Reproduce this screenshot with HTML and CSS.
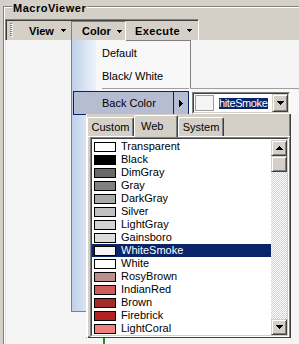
FILE: index.html
```html
<!DOCTYPE html>
<html>
<head>
<meta charset="utf-8">
<title>MacroViewer</title>
<link rel="stylesheet" href="styles.css">
</head>
<body>
<div class="window">
  <div class="groupbox">
    <div class="gb-label">MacroViewer</div>
    <div class="gb-inner">
      <div class="toolbar">
        <div class="grip"></div>
        <div class="tbtn view"><span>View</span><svg class="dd" width="5" height="3" viewBox="0 0 5 3" shape-rendering="crispEdges"><path d="M0 0h5v1h-1v1h-1v1h-1v-1h-1v-1h-1z"/></svg></div>
        <div class="tbtn color"><span>Color</span><svg class="dd" width="5" height="3" viewBox="0 0 5 3" shape-rendering="crispEdges"><path d="M0 0h5v1h-1v1h-1v1h-1v-1h-1v-1h-1z"/></svg></div>
        <div class="tbtn exec"><span>Execute</span><svg class="dd" width="5" height="3" viewBox="0 0 5 3" shape-rendering="crispEdges"><path d="M0 0h5v1h-1v1h-1v1h-1v-1h-1v-1h-1z"/></svg></div>
      </div>
      <div class="panel"></div>
    </div>
  </div>

  <div class="menu">
    <div class="mi">Default</div>
    <div class="mi">Black/ White</div>
    <div class="msep"></div>
    <div class="mi hl"><span>Back Color</span><span class="mi-arrow"><svg width="4" height="7" viewBox="0 0 4 7" shape-rendering="crispEdges"><path d="M0 0h1v1h1v1h1v1h1v1h-1v1h-1v1h-1v1h-1z"/></svg></span></div>
  </div>

  <div class="submenu">
    <div class="combo">
      <div class="combo-in">
        <div class="swatch-big"></div>
        <div class="combo-text">hiteSmoke</div>
        <div class="combo-btn raised"><svg width="7" height="4" viewBox="0 0 7 4" shape-rendering="crispEdges"><path d="M0 0h7v1h-1v1h-1v1h-1v1h-1v-1h-1v-1h-1v-1h-1z"/></svg></div>
      </div>
    </div>
  </div>

  <div class="popup">
    <div class="tabs">
      <div class="tab custom">Custom</div>
      <div class="tab web">Web</div>
      <div class="tab system">System</div>
    </div>
    <div class="page">
      <div class="list">
        <div class="list-in">
          <div class="items">
            <div class="row"><span class="sw" style="background:#ffffff"></span>Transparent</div>
            <div class="row"><span class="sw" style="background:#000000"></span>Black</div>
            <div class="row"><span class="sw" style="background:#696969"></span>DimGray</div>
            <div class="row"><span class="sw" style="background:#808080"></span>Gray</div>
            <div class="row"><span class="sw" style="background:#a9a9a9"></span>DarkGray</div>
            <div class="row"><span class="sw" style="background:#c0c0c0"></span>Silver</div>
            <div class="row"><span class="sw" style="background:#d3d3d3"></span>LightGray</div>
            <div class="row"><span class="sw" style="background:#dcdcdc"></span>Gainsboro</div>
            <div class="row sel"><span class="sw" style="background:#f5f5f5"></span>WhiteSmoke</div>
            <div class="row"><span class="sw" style="background:#ffffff"></span>White</div>
            <div class="row"><span class="sw" style="background:#bc8f8f"></span>RosyBrown</div>
            <div class="row"><span class="sw" style="background:#cd5c5c"></span>IndianRed</div>
            <div class="row"><span class="sw" style="background:#a52a2a"></span>Brown</div>
            <div class="row"><span class="sw" style="background:#b22222"></span>Firebrick</div>
            <div class="row"><span class="sw" style="background:#f08080"></span>LightCoral</div>
          </div>
          <div class="scroll">
            <div class="sbtn raised"><svg width="7" height="4" viewBox="0 0 7 4" shape-rendering="crispEdges"><path d="M3 0h1v1h1v1h1v1h1v1h-7v-1h1v-1h1v-1h1z"/></svg></div>
            <div class="thumb raised"></div>
            <div class="track"></div>
            <div class="sbtn raised"><svg width="7" height="4" viewBox="0 0 7 4" shape-rendering="crispEdges"><path d="M0 0h7v1h-1v1h-1v1h-1v1h-1v-1h-1v-1h-1v-1h-1z"/></svg></div>
          </div>
        </div>
      </div>
    </div>
  </div>

  <div class="wire"></div>
</div>
</body>
</html>
```

FILE: styles.css
```css
* { box-sizing: border-box; }
html, body { margin: 0; padding: 0; }
body {
  width: 299px;
  height: 344px;
  overflow: hidden;
  background: #d4d0c8;
  font-family: "Liberation Sans", Arial, sans-serif;
  font-size: 11px;
  color: #000;
}
.window { position: relative; width: 299px; height: 344px; overflow: hidden; }

/* group box */
.groupbox {
  position: relative;
  margin: 6px 0 0 3px;
  height: 338px;
  border-top: 1px solid #808080;
  border-left: 1px solid #808080;
}
.gb-label {
  position: absolute;
  left: 8px;
  top: -5px;
  z-index: 1;
  padding: 0 1px;
  font: bold 11px "Liberation Sans", Arial, sans-serif;
  line-height: 13px;
  letter-spacing: 0.5px;
  background: #d4d0c8;
}
.gb-inner {
  display: flex;
  flex-direction: column;
  height: 100%;
  padding-top: 11px;
  border-top: 1px solid #fff;
  border-left: 1px solid #fff;
}

/* toolbar */
.toolbar {
  display: flex;
  align-items: stretch;
  flex: none;
  width: 194px;
  height: 21px;
  padding-top: 1px;
  border-top: 1px solid #808080;
  border-left: 1px solid #808080;
  border-right: 1px solid #fff;
  box-shadow: inset 1px 1px 0 #404040, inset -1px 0 0 #d4d0c8;
}
.grip {
  flex: none;
  width: 3px;
  height: 14px;
  margin: 2px 0 0 4px;
  background:
    repeating-linear-gradient(#808080 0 1px, transparent 1px 2px) 0 0 / 2px 100% no-repeat,
    repeating-linear-gradient(#ffffff 0 1px, transparent 1px 2px) 1px 1px / 2px 100% no-repeat;
}
.tbtn {
  display: flex;
  align-items: center;
  flex: none;
  font: bold 11px "Liberation Sans", Arial, sans-serif;
  white-space: nowrap;
}
.tbtn.view { width: 56px; margin-left: 2px; padding: 0 5px 0 14px; }
.tbtn.color {
  width: 55px;
  padding: 0 3px 0 10px;
  border-left: 1px solid #808080;
  border-top: 1px solid #808080;
  border-right: 1px solid #fff;
}
.tbtn.exec { width: 71px; padding: 0 5px 0 9px; letter-spacing: 0.4px; }
.dd { margin-left: auto; flex: none; }

.panel {
  flex: 1;
  background: #f5f5f5;
  border-left: 1px solid #e2e2e2;
}

/* dropdown menu */
.menu {
  position: absolute;
  left: 71px;
  top: 40px;
  width: 120px;
  height: 272px;
  padding-top: 2px;
  border: 1px solid #808080;
  border-top: 0;
  background:
    linear-gradient(to right, #bfd0e9, #edf2f9) 0 0 / 24px 100% no-repeat,
    #f8f8f8;
}
.menu::before {
  content: "";
  position: absolute;
  left: 54px;
  right: 0;
  top: 0;
  height: 1px;
  background: #808080;
}
.mi {
  height: 23px;
  line-height: 23px;
  padding-left: 30px;
  white-space: nowrap;
}
.msep {
  height: 3px;
  margin: 0 1px 0 30px;
  border-top: 1px solid #a0a0a0;
}
.mi.hl {
  display: flex;
  align-items: center;
  height: 24px;
  line-height: normal;
  margin: 0 1px;
  padding-left: 28px;
  border: 1px solid #0a246a;
  background: #b6bdd2;
}
.mi-arrow {
  display: flex;
  align-items: center;
  align-self: stretch;
  width: 15px;
  margin-left: auto;
  padding-left: 5px;
  border-left: 1px solid #0a246a;
}

/* submenu with combo */
.submenu {
  position: absolute;
  left: 190px;
  top: 88px;
  width: 109px;
  height: 27px;
  padding: 3px 0 0 2px;
  border-top: 1px solid #a0a0a0;
  background: #f8f8f8;
}
.combo {
  display: flex;
  width: 98px;
  height: 22px;
  border: 1px solid;
  border-color: #808080 #fff #fff #808080;
}
.combo-in {
  display: flex;
  align-items: flex-start;
  flex: 1;
  border: 1px solid;
  border-color: #404040 #d4d0c8 #d4d0c8 #404040;
  background: #fff;
}
.swatch-big {
  flex: none;
  width: 19px;
  height: 16px;
  margin: 1px 0 0 1px;
  border: 1px solid #9c9c9c;
  background: #f5f5f5;
}
.combo-text {
  flex: none;
  width: 49px;
  height: 11px;
  margin: 4px 0 0 5px;
  line-height: 11px;
  letter-spacing: -0.4px;
  white-space: nowrap;
  overflow: hidden;
  color: #fff;
  background: #0a246a;
}
.combo-btn {
  display: flex;
  align-items: center;
  justify-content: center;
  flex: none;
  width: 16px;
  height: 18px;
  margin-left: auto;
}
.raised {
  background: #d4d0c8;
  border: 1px solid;
  border-color: #d4d0c8 #404040 #404040 #d4d0c8;
  box-shadow: inset 1px 1px 0 #fff, inset -1px -1px 0 #808080;
}

/* color popup */
.popup {
  position: absolute;
  left: 86px;
  top: 114px;
  width: 205px;
  height: 224px;
  display: flex;
  flex-direction: column;
  border-left: 1px solid #fff;
  border-right: 1px solid #404040;
  border-bottom: 1px solid #404040;
  box-shadow: inset -1px -1px 0 #808080;
  background: #d4d0c8;
}
.tabs {
  display: flex;
  align-items: flex-end;
  flex: none;
  height: 22px;
}
.tab {
  flex: none;
  height: 19px;
  line-height: 18px;
  text-align: center;
  white-space: nowrap;
  border: 1px solid #fff;
  border-right-color: #404040;
  border-bottom: 0;
  border-radius: 2px 2px 0 0;
  box-shadow: inset -1px 0 0 #808080;
  background: #d4d0c8;
}
.tab.custom { width: 47px; }
.tab.web {
  position: relative;
  z-index: 1;
  width: 44px;
  height: 22px;
  margin-bottom: -1px;
  padding: 1px 0 0 6px;
  text-align: left;
}
.tab.system { width: 46px; }
.page {
  flex: 1;
  display: flex;
  flex-direction: column;
  padding: 0 1px 1px 2px;
  border-top: 1px solid #fff;
  border-left: 1px solid #fff;
}
.list {
  flex: 1;
  border: 1px solid;
  border-color: #808080 #fff #fff #808080;
}
.list-in {
  display: flex;
  height: 100%;
  padding-top: 1px;
  border: 1px solid;
  border-color: #404040 #d4d0c8 #d4d0c8 #404040;
  background: #fff;
}
.items { flex: 1; overflow: hidden; }
.row {
  display: flex;
  align-items: flex-start;
  height: 13px;
  line-height: 13px;
  white-space: nowrap;
}
.row.sel { background: #0a246a; color: #fff; }
.sw {
  flex: none;
  width: 22px;
  height: 10px;
  margin: 2px 5px 0 2px;
  border: 1px solid #000;
}
.scroll {
  display: flex;
  flex-direction: column;
  flex: none;
  width: 16px;
}
.sbtn {
  display: flex;
  align-items: center;
  justify-content: center;
  flex: none;
  height: 16px;
}
.thumb { flex: none; height: 16px; }
.track {
  flex: 1;
  background-image: conic-gradient(#fff 25%, #d4d0c8 0 50%, #fff 0 75%, #d4d0c8 0);
  background-size: 2px 2px;
}

.wire {
  position: absolute;
  left: 103px;
  top: 338px;
  width: 2px;
  height: 6px;
  background: #1d9a1d;
}
```
